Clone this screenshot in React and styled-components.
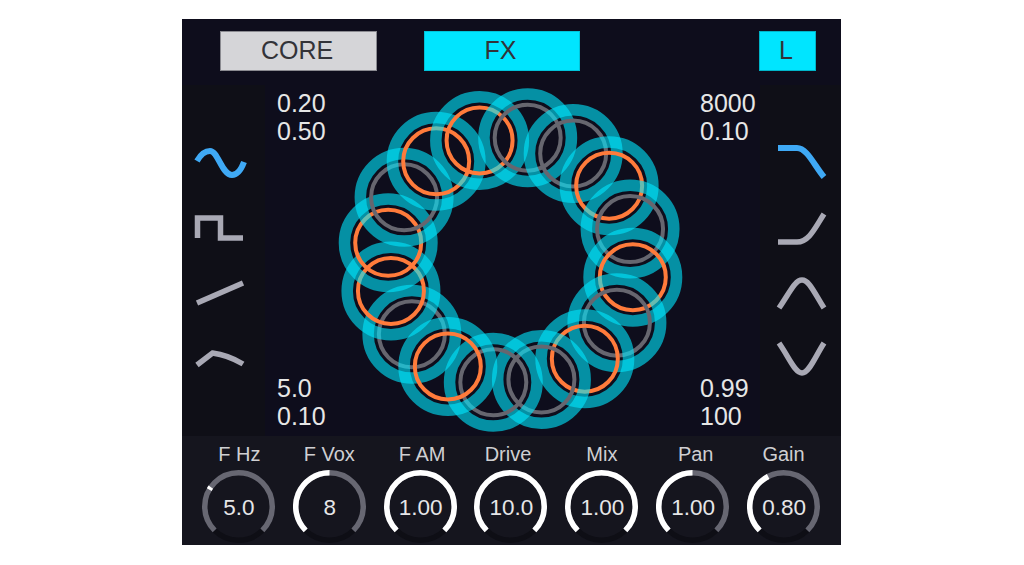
import React from 'react';
import styled, { createGlobalStyle } from 'styled-components';

const CENTER = { x: 245.5, y: 175 };
const RING_ORBIT = 123.5;
// true = orange inner ring, clockwise from the top
const RINGS = [false, false, true, false, true, false, true, false, false, true, false, true, true, false, true, true];
// each cell paints over the one before it, the stack starts at the lower left
const FIRST_PAINTED = 10;

const KNOBS = [
  { label: 'F Hz', value: '5.0', from: -60, to: -55, nudge: 1 },
  { label: 'F Vox', value: '8', from: -135, to: 0, nudge: 0 },
  { label: 'F AM', value: '1.00', from: -135, to: 135, nudge: 2 },
  { label: 'Drive', value: '10.0', from: -135, to: 135, nudge: -3 },
  { label: 'Mix', value: '1.00', from: -135, to: 135, nudge: 0 },
  { label: 'Pan', value: '1.00', from: -135, to: 0, nudge: 3 },
  { label: 'Gain', value: '0.80', from: -135, to: -27, nudge: 0 },
];

const LEFT_WAVES = [
  { d: 'M7 20C11 13 15 10 20 10C28 10 32 34 42 34C47 34 51 29 54 21', active: true },
  { d: 'M7.5 32V12H30.5V32H53' },
  { d: 'M7 32L53 12' },
  { d: 'M7 29L22.5 17Q38 19 53 28' },
];

const RIGHT_FILTERS = [
  { d: 'M7 7H26C36 7 43 24 53 36', active: true },
  { d: 'M7 36H26C38 36 44 22 53 8' },
  { d: 'M8 37C19 21 24 9 31 9C38 9 43 21 53 37' },
  { d: 'M8 7C19 23 24 37 31 37C38 37 43 23 53 7' },
];

const polar = (deg, r) => {
  const a = (deg * Math.PI) / 180;
  return [36.5 + r * Math.sin(a), 36.5 - r * Math.cos(a)];
};

const arc = (from, to, r = 33.75) => {
  const [x1, y1] = polar(from, r);
  const [x2, y2] = polar(to, r);
  return `M${x1} ${y1}A${r} ${r} 0 ${to - from > 180 ? 1 : 0} 1 ${x2} ${y2}`;
};

const Wave = ({ d, active }) => (
  <WaveIcon viewBox="0 0 60 44" $active={active}>
    <path d={d} />
  </WaveIcon>
);

const RingChart = () => {
  const cells = RINGS.map((orange, i) => {
    const a = ((8 + i * 22.5) * Math.PI) / 180;
    return {
      orange,
      x: CENTER.x + RING_ORBIT * Math.sin(a),
      y: CENTER.y - RING_ORBIT * Math.cos(a),
    };
  });
  const painted = [...cells.slice(FIRST_PAINTED), ...cells.slice(0, FIRST_PAINTED)];
  return (
    <Chart viewBox="0 0 495 351">
      {painted.map((c, i) => (
        <g key={i} fill="none">
          <circle cx={c.x} cy={c.y} r="33" strokeWidth="4" stroke={c.orange ? '#ff7b3b' : '#66666f'} />
          <circle cx={c.x} cy={c.y} r="43.75" strokeWidth="11.5" stroke="#00e8ff" strokeOpacity="0.6" />
        </g>
      ))}
    </Chart>
  );
};

const Knob = ({ label, value, from, to, nudge }) => (
  <KnobBox>
    <KnobLabel $nudge={nudge}>{label}</KnobLabel>
    <Dial>
      <DialSvg viewBox="0 0 73 73">
        <path d={arc(135, 225)} stroke="#0e0e15" />
        <path d={arc(-135, 135)} stroke="#676772" />
        <path d={arc(from, to)} stroke="#ffffff" />
      </DialSvg>
      <DialValue>{value}</DialValue>
    </Dial>
  </KnobBox>
);

const App = () => (
  <>
    <GlobalStyle />
    <Frame>
      <TopBar>
        <TabButton $width={157} $tone="#d5d5d8" $edge="#8a8a90">CORE</TabButton>
        <TabButton $width={156} $tone="#00e5ff" $edge="#00c4da">FX</TabButton>
        <ChannelButton $width={57} $tone="#00e5ff" $edge="#00b4c8">L</ChannelButton>
      </TopBar>
      <Main>
        <LeftColumn>
          {LEFT_WAVES.map((w, i) => <Wave key={i} {...w} />)}
        </LeftColumn>
        <Center>
          <RingChart />
          <Readouts>
            <ReadoutRow>
              <Readout>0.20<br />0.50</Readout>
              <Readout>8000<br />0.10</Readout>
            </ReadoutRow>
            <ReadoutRow>
              <Readout>5.0<br />0.10</Readout>
              <Readout>0.99<br />100</Readout>
            </ReadoutRow>
          </Readouts>
        </Center>
        <RightColumn>
          {RIGHT_FILTERS.map((w, i) => <Wave key={i} {...w} />)}
        </RightColumn>
      </Main>
      <KnobStrip>
        {KNOBS.map((k) => <Knob key={k.label} {...k} />)}
      </KnobStrip>
    </Frame>
  </>
);

const GlobalStyle = createGlobalStyle`
  html, body {
    margin: 0;
    background: #ffffff;
    font-family: "Liberation Sans", Arial, sans-serif;
  }
`;

const Frame = styled.div`
  width: 659px;
  height: 526px;
  margin: 19px 0 0 182px;
  display: flex;
  flex-direction: column;
  background: #0e0d1c;
`;

const TopBar = styled.div`
  height: 66px;
  box-sizing: border-box;
  padding: 12px 25px 0 38px;
  display: flex;
  align-items: flex-start;
  gap: 47px;
`;

const TabButton = styled.div`
  width: ${(p) => p.$width}px;
  height: 40px;
  box-sizing: border-box;
  padding: 0 3px 2px 0;
  display: flex;
  align-items: center;
  justify-content: center;
  background: ${(p) => p.$tone};
  border: 1px solid ${(p) => p.$edge};
  color: #333338;
  font-size: 25px;
`;

const ChannelButton = styled(TabButton)`
  margin-left: auto;
`;

const Main = styled.div`
  height: 351px;
  display: flex;
`;

const SideColumn = styled.div`
  display: flex;
  flex-direction: column;
  justify-content: center;
  align-items: center;
  gap: 21px;
  background: #0f0f17;
`;

const LeftColumn = styled(SideColumn)`
  width: 83px;
  padding-right: 7px;
  box-sizing: border-box;
`;

const RightColumn = styled(SideColumn)`
  width: 81px;
`;

const WaveIcon = styled.svg`
  width: 60px;
  height: 44px;
  display: block;
  fill: none;
  stroke: ${(p) => (p.$active ? '#3fa9f5' : '#a9a9b5')};
  stroke-width: ${(p) => (p.$active ? 6 : 5.5)};
`;

const Center = styled.div`
  width: 495px;
  height: 351px;
  display: grid;
`;

const Chart = styled.svg`
  grid-area: 1 / 1;
  width: 495px;
  height: 351px;
  overflow: visible;
`;

const Readouts = styled.div`
  grid-area: 1 / 1;
  z-index: 1;
  box-sizing: border-box;
  padding: 4px 4px 6px 12px;
  display: flex;
  flex-direction: column;
  justify-content: space-between;
`;

const ReadoutRow = styled.div`
  display: flex;
  justify-content: space-between;
`;

const Readout = styled.div`
  width: 56px;
  color: #e6e6e6;
  font-size: 25px;
  line-height: 28px;
`;

const KnobStrip = styled.div`
  flex: 1;
  box-sizing: border-box;
  padding: 6px 12px 0 11px;
  display: grid;
  grid-template-columns: repeat(7, 1fr);
  background: #15151e;
`;

const KnobBox = styled.div`
  display: flex;
  flex-direction: column;
  align-items: center;
  gap: 4px;
`;

const KnobLabel = styled.div`
  margin-left: ${(p) => p.$nudge * 2}px;
  color: #cfcfd2;
  font-size: 20px;
  line-height: 24px;
`;

const Dial = styled.div`
  width: 73px;
  height: 73px;
  display: grid;
  place-items: center;
`;

const DialSvg = styled.svg`
  grid-area: 1 / 1;
  width: 73px;
  height: 73px;
  fill: none;
  stroke-width: 5.5;
`;

const DialValue = styled.div`
  grid-area: 1 / 1;
  padding: 3px 0 0 1px;
  color: #e6e6e8;
  font-size: 22.5px;
`;

export default App;
